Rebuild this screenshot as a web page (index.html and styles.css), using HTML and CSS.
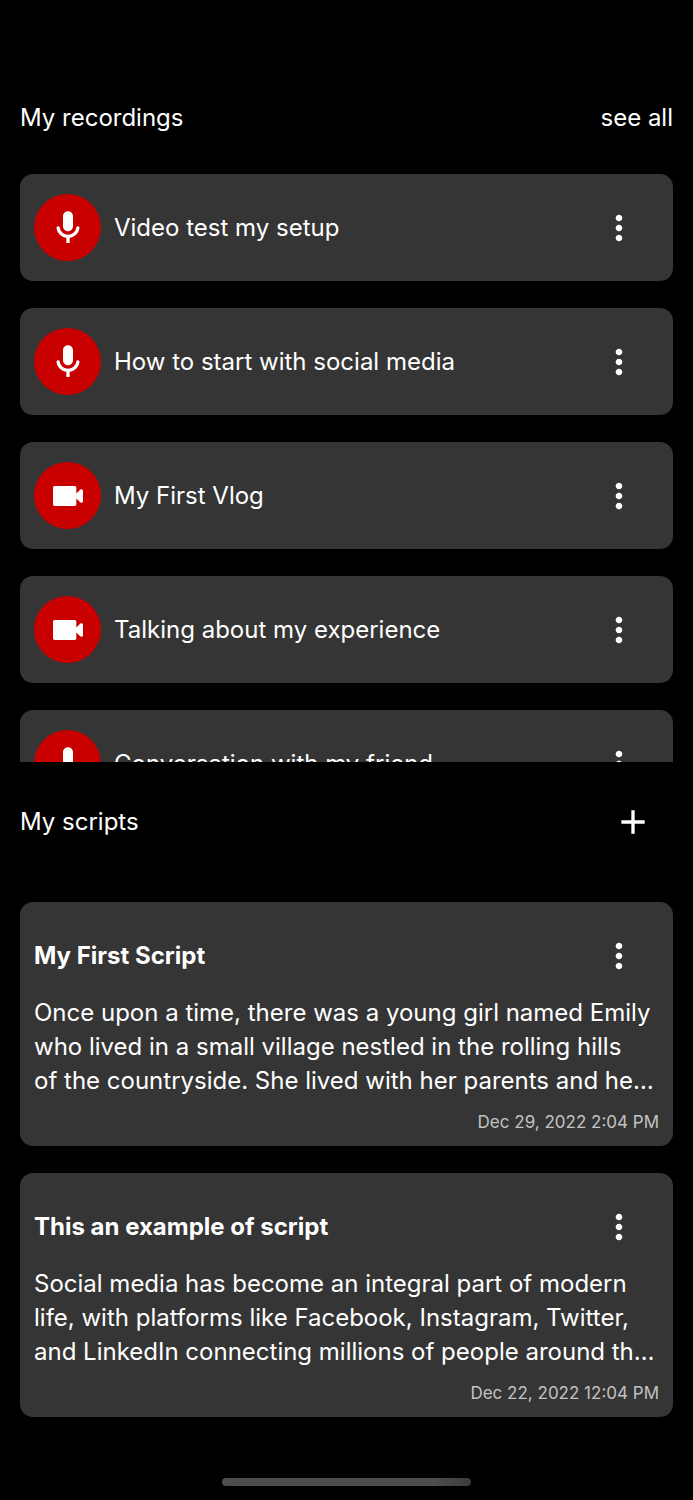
FILE: index.html
```html
<!DOCTYPE html>
<html lang="en">

<head>
    <meta charset="UTF-8">
    <meta name="viewport" content="width=device-width, initial-scale=1">
    <title>My recordings</title>
    <link rel="stylesheet" href="styles.css">
</head>

<body>
    <!-- Shared icons -->
    <svg class="icon-defs" aria-hidden="true">
        <symbol id="icon-mic" viewBox="0 0 24 24">
            <path d="M12 14c1.66 0 3-1.34 3-3V5c0-1.66-1.34-3-3-3S9 3.34 9 5v6c0 1.66 1.34 3 3 3zm5.91-3c-.49 0-.9.36-.98.85C16.52 14.2 14.47 16 12 16s-4.52-1.8-4.93-4.15c-.08-.49-.49-.85-.98-.85-.61 0-1.09.54-1 1.14.49 3 2.89 5.35 5.91 5.78V21h2v-3.08c3.02-.43 5.42-2.78 5.91-5.78.1-.6-.39-1.14-1-1.14z"/>
        </symbol>
        <symbol id="icon-video" viewBox="0 0 24 24">
            <path d="M17 10.5V7c0-.55-.45-1-1-1H4c-.55 0-1 .45-1 1v10c0 .55.45 1 1 1h12c.55 0 1-.45 1-1v-3.5l2.29 2.29c.63.63 1.71.18 1.71-.71V8.91c0-.89-1.08-1.34-1.71-.71L17 10.5z"/>
        </symbol>
        <symbol id="icon-more" viewBox="0 0 24 24">
            <path d="M12 8c1.1 0 2-.9 2-2s-.9-2-2-2-2 .9-2 2 .9 2 2 2zm0 2c-1.1 0-2 .9-2 2s.9 2 2 2 2-.9 2-2-.9-2-2-2zm0 6c-1.1 0-2 .9-2 2s.9 2 2 2 2-.9 2-2-.9-2-2-2z"/>
        </symbol>
        <symbol id="icon-add" viewBox="0 0 24 24">
            <path d="M19 13h-6v6h-2v-6H5v-2h6V5h2v6h6v2z"/>
        </symbol>
    </svg>

    <main>
        <!-- Recordings -->
        <section>
            <div class="section-header recordings-header">
                <h2>My recordings</h2>
                <a href="#recordings">see all</a>
            </div>

            <ul id="recordings" class="recordings">
                <li class="card recording">
                    <span class="avatar"><svg class="icon"><use href="#icon-mic"/></svg></span>
                    <span class="recording-title">Video test my setup</span>
                    <button type="button" class="icon-button" aria-label="Options"><svg class="icon"><use href="#icon-more"/></svg></button>
                </li>
                <li class="card recording">
                    <span class="avatar"><svg class="icon"><use href="#icon-mic"/></svg></span>
                    <span class="recording-title">How to start with social media</span>
                    <button type="button" class="icon-button" aria-label="Options"><svg class="icon"><use href="#icon-more"/></svg></button>
                </li>
                <li class="card recording">
                    <span class="avatar"><svg class="icon"><use href="#icon-video"/></svg></span>
                    <span class="recording-title">My First Vlog</span>
                    <button type="button" class="icon-button" aria-label="Options"><svg class="icon"><use href="#icon-more"/></svg></button>
                </li>
                <li class="card recording">
                    <span class="avatar"><svg class="icon"><use href="#icon-video"/></svg></span>
                    <span class="recording-title">Talking about my experience</span>
                    <button type="button" class="icon-button" aria-label="Options"><svg class="icon"><use href="#icon-more"/></svg></button>
                </li>
                <li class="card recording">
                    <span class="avatar"><svg class="icon"><use href="#icon-mic"/></svg></span>
                    <span class="recording-title">Conversation with my friend</span>
                    <button type="button" class="icon-button" aria-label="Options"><svg class="icon"><use href="#icon-more"/></svg></button>
                </li>
            </ul>
        </section>

        <!-- Scripts -->
        <section>
            <div class="section-header scripts-header">
                <h2>My scripts</h2>
                <button type="button" class="icon-button" aria-label="Add script"><svg class="icon"><use href="#icon-add"/></svg></button>
            </div>

            <div class="scripts">
                <article class="card script">
                    <div class="script-header">
                        <h3>My First Script</h3>
                        <button type="button" class="icon-button" aria-label="Options"><svg class="icon"><use href="#icon-more"/></svg></button>
                    </div>
                    <p>Once upon a time, there was a young girl named Emily who lived in a small village nestled in the rolling hills of&nbsp;the countryside. She lived with her parents and he…</p>
                    <time datetime="2022-12-29T14:04">Dec 29, 2022 2:04 PM</time>
                </article>
                <article class="card script">
                    <div class="script-header">
                        <h3>This an example of script</h3>
                        <button type="button" class="icon-button" aria-label="Options"><svg class="icon"><use href="#icon-more"/></svg></button>
                    </div>
                    <p>Social media has become an integral part of modern life, with platforms like Facebook, Instagram, Twitter, and LinkedIn connecting millions of people around th…</p>
                    <time datetime="2022-12-22T12:04">Dec 22, 2022 12:04 PM</time>
                </article>
            </div>
        </section>
    </main>

    <div class="home-indicator"></div>
</body>

</html>
```

FILE: styles.css
```css
* {
    box-sizing: border-box;
}

body {
    font-family: Inter, sans-serif;
    font-size: 24px;
    line-height: 34px;
    margin: 0;
    padding: 78px 20px 14px;
    min-height: 100vh;
    display: flex;
    flex-direction: column;
    background-color: #000;
    color: #fff;
}

h2, h3, p, ul {
    margin: 0;
    padding: 0;
    font-size: 24px;
}

h2 {
    font-weight: 400;
}

a {
    color: #fff;
    text-decoration: none;
}

.icon-defs {
    display: none;
}

.icon {
    width: 40px;
    height: 40px;
    fill: #fff;
}

.icon-button {
    display: flex;
    align-items: center;
    justify-content: center;
    flex: none;
    width: 80px;
    height: 80px;
    padding: 0;
    border: none;
    background: none;
    cursor: pointer;
}

.section-header {
    display: flex;
    align-items: center;
    justify-content: space-between;
    height: 80px;
}

.recordings-header {
    margin-bottom: 16px;
}

.scripts-header {
    margin-top: 20px;
    margin-bottom: 40px;
}

.card {
    background-color: #353535;
    border-radius: 13px;
}

/* the list scrolls on its own, the last row is cut */
.recordings {
    display: flex;
    flex-direction: column;
    gap: 27px;
    max-height: 588px;
    overflow-y: auto;
    scrollbar-width: none;
    list-style: none;
}

.recording {
    display: flex;
    align-items: center;
    flex: none;
    gap: 13px;
    min-height: 107px;
    padding: 0 14px;
}

.recording-title {
    flex: 1;
}

.avatar {
    display: flex;
    align-items: center;
    justify-content: center;
    flex: none;
    width: 67px;
    height: 67px;
    border-radius: 50%;
    background-color: #c80000;
}

.scripts {
    display: flex;
    flex-direction: column;
    gap: 27px;
}

.script {
    padding: 14px 14px 13px;
}

.script-header {
    display: flex;
    align-items: center;
    justify-content: space-between;
}

h3 {
    font-weight: 700;
}

.script p {
    display: -webkit-box;
    -webkit-box-orient: vertical;
    -webkit-line-clamp: 3;
    overflow: hidden;
}

.script time {
    display: block;
    margin-top: 13px;
    font-size: 17px;
    line-height: 22px;
    text-align: right;
    color: #c2c2c2;
}

.home-indicator {
    width: 38%;
    height: 8px;
    margin: auto auto 0;
    border-radius: 4px;
    background: linear-gradient(to right, #4d4d4d 85%, #3c3c3c);
}
```
